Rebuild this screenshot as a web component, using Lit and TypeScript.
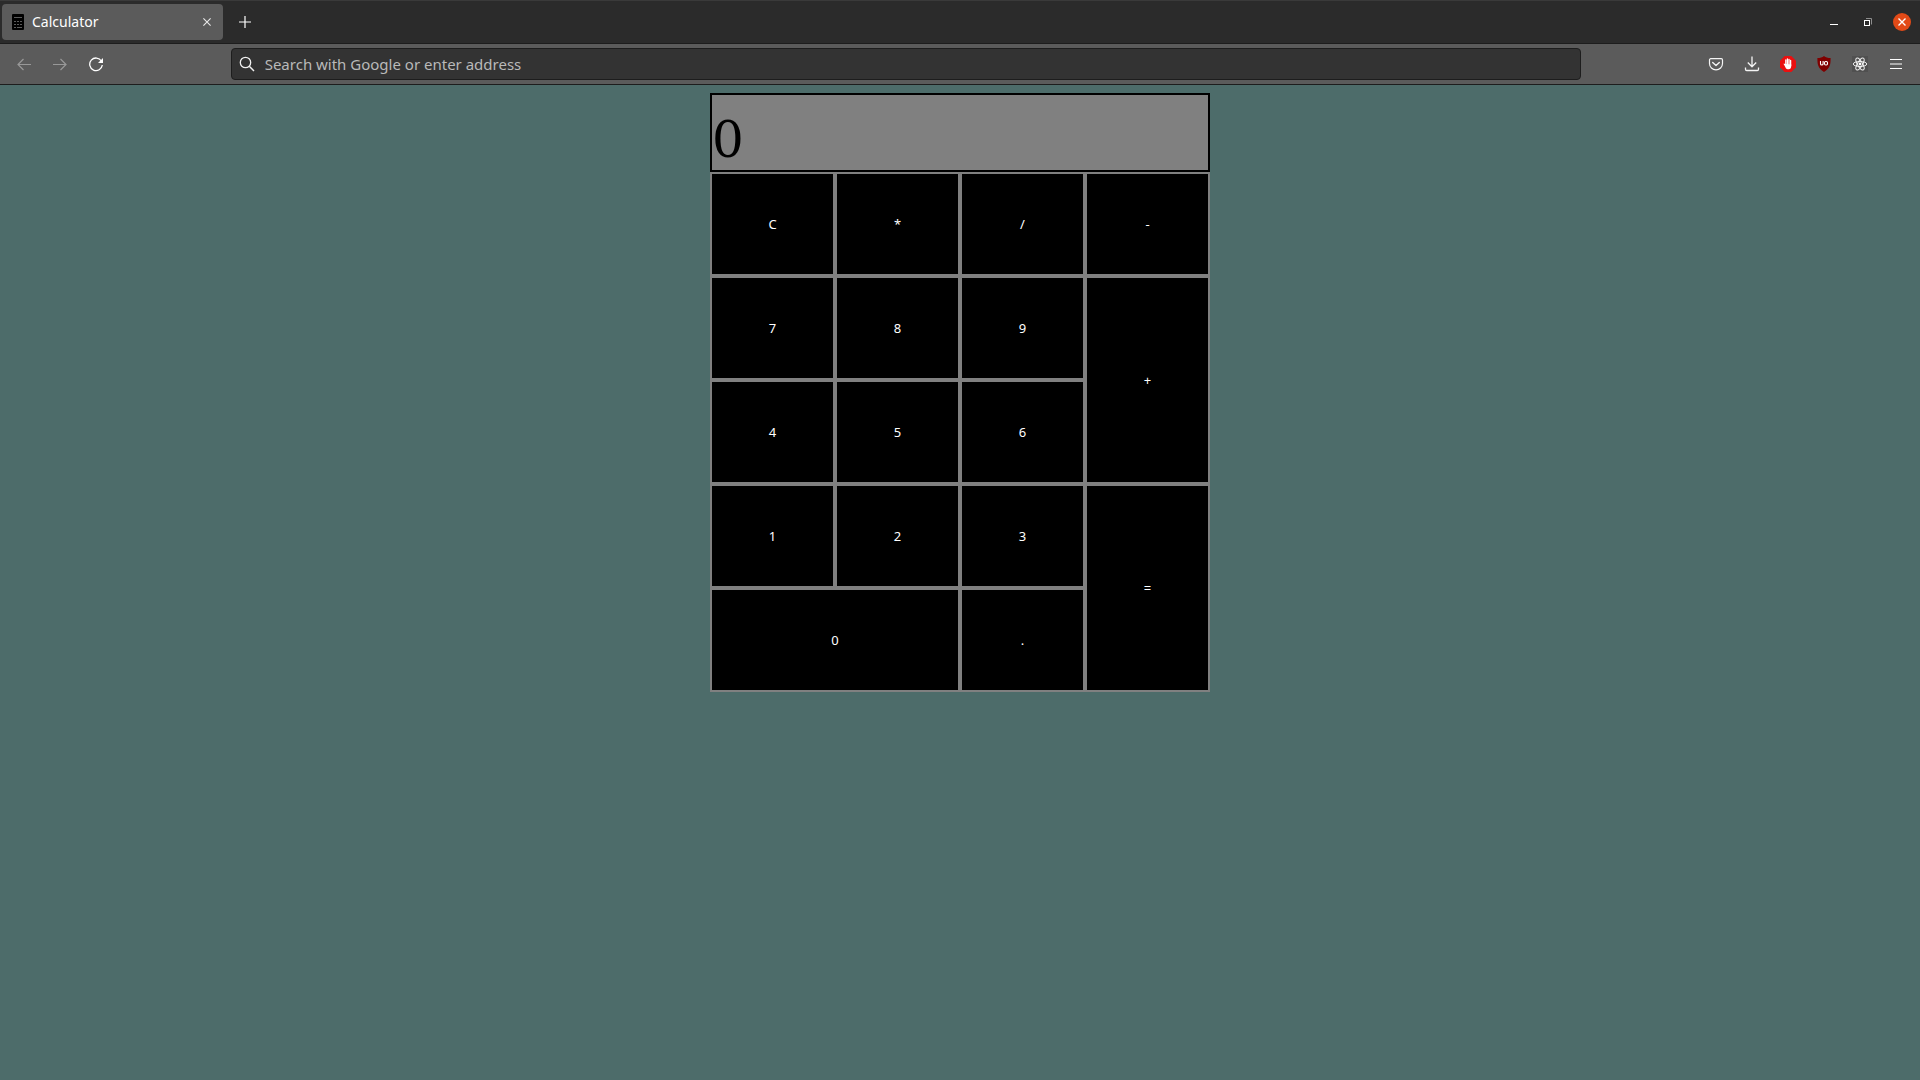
import { LitElement, html, css, svg } from "lit";
import { customElement, state } from "lit/decorators.js";

@customElement("browser-tabs")
class BrowserTabs extends LitElement {
  static styles = css`
    :host {
      display: block;
    }
    .strip {
      display: flex;
      align-items: center;
      box-sizing: border-box;
      height: 44px;
      padding: 0 9px 0 2px;
      background: #2b2b2b;
      border-top: 1px solid #3a3a3a;
      border-bottom: 1px solid #1d1d1d;
      font-family: "Noto Sans", "Open Sans", sans-serif;
    }
    button {
      display: flex;
      align-items: center;
      justify-content: center;
      padding: 0;
      border: 0;
      background: none;
      color: #fff;
    }
    svg {
      display: block;
    }
    .tab {
      display: flex;
      align-items: center;
      box-sizing: border-box;
      width: 221px;
      height: 36px;
      padding: 0 6px 0 10px;
      background: #5b5b5b;
      border-radius: 4px;
    }
    .title {
      flex: 1;
      margin-left: 8px;
      color: #fff;
      font-size: 14px;
      line-height: 20px;
    }
    .close-tab {
      width: 20px;
      height: 20px;
    }
    .new-tab {
      width: 44px;
      height: 36px;
    }
    .window {
      display: flex;
      gap: 16px;
      margin-left: auto;
    }
    .window button {
      width: 18px;
      height: 18px;
    }
    .window .quit {
      border-radius: 50%;
      background: #e24a17;
    }
  `;

  render() {
    return html`
      <header class="strip">
        <div class="tab">
          <svg width="12" height="16" viewBox="0 0 12 16" aria-hidden="true">
            <rect width="12" height="16" rx="1" fill="#000" />
            <path
              d="M2 3.500h8M2 7.500h2M5 7.500h2M8 7.500h2M2 10.500h2M5 10.500h2M8 10.500h2M2 13.500h2M5 13.500h5"
              stroke="#5b5b5b"
            />
          </svg>
          <span class="title">Calculator</span>
          <button class="close-tab" aria-label="Close tab">
            <svg width="8" height="8" viewBox="0 0 8 8" stroke="#e8e8e8" stroke-width="1.1">
              <path d="M.4.4l7.200 7.200M7.600.4L.4 7.600" />
            </svg>
          </button>
        </div>
        <button class="new-tab" aria-label="New tab">
          <svg width="12" height="12" viewBox="0 0 12 12" stroke="#fff" stroke-width="1.2">
            <path d="M6 0v12M0 6h12" />
          </svg>
        </button>
        <div class="window">
          <button aria-label="Minimize">
            <svg width="18" height="18" viewBox="0 0 18 18">
              <path d="M5 11.500h8" stroke="#fff" />
            </svg>
          </button>
          <button aria-label="Restore">
            <svg width="18" height="18" viewBox="0 0 18 18" fill="none">
              <path d="M7 5.500h5.500v6" stroke="#8e8e8e" />
              <rect x="5.500" y="7.500" width="5" height="5" stroke="#fff" />
            </svg>
          </button>
          <button class="quit" aria-label="Close window">
            <svg width="8" height="8" viewBox="0 0 8 8" stroke="#fff" stroke-width="1.400">
              <path d="M.5.5l7 7M7.500.5l-7 7" />
            </svg>
          </button>
        </div>
      </header>
    `;
  }
}

const ICONS = {
  back: svg`<path d="M15 8.500H1.500M7.500 3L2 8.500L7.500 14" stroke="#989898" stroke-width="1.200"/>`,
  forward: svg`<path d="M1 8.500h13.500M8.500 3L14 8.500L8.500 14" stroke="#989898" stroke-width="1.200"/>`,
  reload: svg`<path d="M13.400 5A6.300 6.300 0 1 0 14.300 9" stroke="#fff" stroke-width="1.300"/><path d="M15 2v5H10z" fill="#fff"/>`,
  pocket: svg`<path d="M2.700 2.700h10.600a1.200 1.200 0 0 1 1.200 1.200V7.500a6.500 6.300 0 0 1-13 0V3.900a1.200 1.200 0 0 1 1.200-1.200z" stroke="#f4f4f4" stroke-width="1.200"/><path d="M4.700 6.500L8 9.600l3.300-3.100" stroke="#f4f4f4" stroke-width="1.400" stroke-linecap="round" stroke-linejoin="round"/>`,
  download: svg`<path d="M8 .5v10M3.800 6.500L8 10.700l4.200-4.200M1.500 11.500v1.800a1.200 1.200 0 0 0 1.200 1.200h10.600a1.200 1.200 0 0 0 1.200-1.200v-1.800" stroke="#f4f4f4" stroke-width="1.300" stroke-linejoin="round"/>`,
  block: svg`<path d="M4.700 0h6.600L16 4.700v6.600L11.300 16H4.700L0 11.300V4.700z" fill="#ea1010"/><path d="M5.800 4v5M7.400 3v6M9 3.300v6M10.600 4.500v5" stroke="#fff" stroke-width="1.300" stroke-linecap="round"/><path d="M5.200 8L3.900 7.500c-.5.300 0 1 .3 1.600L6 12.500c.7.900 3.800.9 4.500 0 .6-.8.800-2 .8-4z" fill="#fff"/>`,
  shield: svg`<path d="M8 0c1.800 1.400 3.800 2 6.600 2 0 6.500-.3 9.800-6.600 14C1.700 11.800 1.400 8.500 1.400 2 4.200 2 6.200 1.400 8 0z" fill="#800000"/><path d="M4.500 5v2.700a1.300 1.300 0 0 0 2.600 0V5" stroke="#fff" stroke-width="1.100"/><rect x="8.500" y="5.500" width="3" height="3.500" rx="1.200" stroke="#fff" stroke-width="1.100"/>`,
  atom: svg`<rect width="16" height="16" fill="#505050"/><g stroke="#f2f2f2"><ellipse cx="8" cy="8" rx="6.800" ry="2.500"/><ellipse cx="8" cy="8" rx="6.800" ry="2.500" transform="rotate(60 8 8)"/><ellipse cx="8" cy="8" rx="6.800" ry="2.500" transform="rotate(120 8 8)"/></g><circle cx="8" cy="8" r="1.400" fill="#fff"/>`,
  menu: svg`<path d="M2 3.500h12M2 8h12M2 12.500h12" stroke="#fff" stroke-width="1.200"/>`,
};

const glyph = (name: keyof typeof ICONS) => html`
  <svg width="16" height="16" viewBox="0 0 16 16" fill="none">${ICONS[name]}</svg>
`;

@customElement("browser-toolbar")
class BrowserToolbar extends LitElement {
  static styles = css`
    :host {
      display: block;
    }
    .bar {
      display: flex;
      align-items: center;
      box-sizing: border-box;
      height: 41px;
      padding: 0 6px;
      background: #5b5b5b;
      border-bottom: 1px solid #1d1d1d;
    }
    .group {
      display: flex;
    }
    .group button {
      display: flex;
      align-items: center;
      justify-content: center;
      width: 36px;
      height: 32px;
      padding: 0;
      border: 0;
      background: none;
    }
    .address {
      display: flex;
      align-items: center;
      flex: 150;
      box-sizing: border-box;
      height: 32px;
      margin: 0 1px;
      padding: 0 7px;
      gap: 10px;
      background: #333;
      border: 1px solid #1d1d1d;
      border-radius: 4px;
    }
    .space {
      flex: 13;
    }
    svg {
      display: block;
      flex: none;
    }
    .field {
      flex: 1;
      min-width: 0;
      height: 30px;
      padding: 0;
      border: 0;
      outline: 0;
      background: none;
      color: #fff;
      font-family: "Noto Sans", "Open Sans", sans-serif;
      font-size: 15px;
    }
    .field::placeholder {
      color: #b9b9b9;
      opacity: 1;
    }
  `;

  render() {
    return html`
      <nav class="bar">
        <div class="group">
          <button aria-label="Back">${glyph("back")}</button>
          <button aria-label="Forward">${glyph("forward")}</button>
          <button aria-label="Reload">${glyph("reload")}</button>
        </div>
        <div class="space"></div>
        <label class="address">
          <svg width="16" height="16" viewBox="0 0 16 16" fill="none" stroke="#f0f0f0">
            <circle cx="6.500" cy="6.500" r="5.200" stroke-width="1.300" />
            <path d="M10.300 10.300l4.700 4.700" stroke-width="1.500" />
          </svg>
          <input
            class="field"
            type="text"
            aria-label="Address"
            placeholder="Search with Google or enter address"
          />
        </label>
        <div class="space"></div>
        <div class="group">
          <button aria-label="Save to Pocket">${glyph("pocket")}</button>
          <button aria-label="Downloads">${glyph("download")}</button>
          <button aria-label="AdBlock">${glyph("block")}</button>
          <button aria-label="uBlock Origin">${glyph("shield")}</button>
          <button aria-label="React Developer Tools">${glyph("atom")}</button>
          <button aria-label="Menu">${glyph("menu")}</button>
        </div>
      </nav>
    `;
  }
}

const KEYS: { label: string; span?: string }[] = [
  { label: "C" },
  { label: "*" },
  { label: "/" },
  { label: "-" },
  { label: "7" },
  { label: "8" },
  { label: "9" },
  { label: "+", span: "tall" },
  { label: "4" },
  { label: "5" },
  { label: "6" },
  { label: "1" },
  { label: "2" },
  { label: "3" },
  { label: "=", span: "tall" },
  { label: "0", span: "wide" },
  { label: "." },
];

@customElement("calc-pad")
class CalcPad extends LitElement {
  static styles = css`
    :host {
      display: block;
      max-width: 500px;
      margin: 0 auto;
    }
    .screen {
      display: block;
      box-sizing: border-box;
      padding: 15px 0 0;
      overflow: hidden;
      background: #808080;
      border: 2px solid #000;
      color: #000;
      font-family: "DejaVu Serif", serif;
      font-size: 50px;
      line-height: 60px;
    }
    .keys {
      display: grid;
      grid-template-columns: repeat(4, 1fr);
      grid-auto-rows: 104px;
    }
    .key {
      padding: 0;
      background: #000;
      border: 2px solid #808080;
      border-radius: 0;
      color: #fff;
      font-family: "Noto Sans", "Open Sans", sans-serif;
      font-size: 13px;
      line-height: 18px;
    }
    .tall {
      grid-row: span 2;
    }
    .wide {
      grid-column: span 2;
    }
  `;

  @state() private shown = "0";
  private held = 0;
  private pending = "";
  private fresh = true;

  private settle() {
    const value = Number(this.shown);
    const results: Record<string, number> = {
      "+": this.held + value,
      "-": this.held - value,
      "*": this.held * value,
      "/": this.held / value,
    };
    this.held = this.pending ? results[this.pending] : value;
    this.shown = String(this.held);
    this.fresh = true;
  }

  private press(label: string) {
    if (label === "C") {
      this.shown = "0";
      this.held = 0;
      this.pending = "";
      this.fresh = true;
    } else if (/[0-9.]/.test(label)) {
      if (this.fresh) this.shown = label === "." ? "0." : label;
      else if (label !== "." || !this.shown.includes(".")) this.shown += label;
      this.fresh = false;
    } else {
      this.settle();
      this.pending = label === "=" ? "" : label;
    }
  }

  render() {
    return html`
      <output class="screen">${this.shown}</output>
      <div class="keys">
        ${KEYS.map(
          ({ label, span }) => html`
            <button class="key ${span ?? ""}" @click=${() => this.press(label)}>${label}</button>
          `
        )}
      </div>
    `;
  }
}

@customElement("app-root")
class AppRoot extends LitElement {
  static styles = css`
    :host {
      display: flex;
      flex-direction: column;
      min-height: 100vh;
      background: #4d6c6a;
    }
    .page {
      flex: 1;
      padding: 8px;
    }
  `;

  render() {
    return html`
      <browser-tabs></browser-tabs>
      <browser-toolbar></browser-toolbar>
      <main class="page"><calc-pad></calc-pad></main>
    `;
  }
}
